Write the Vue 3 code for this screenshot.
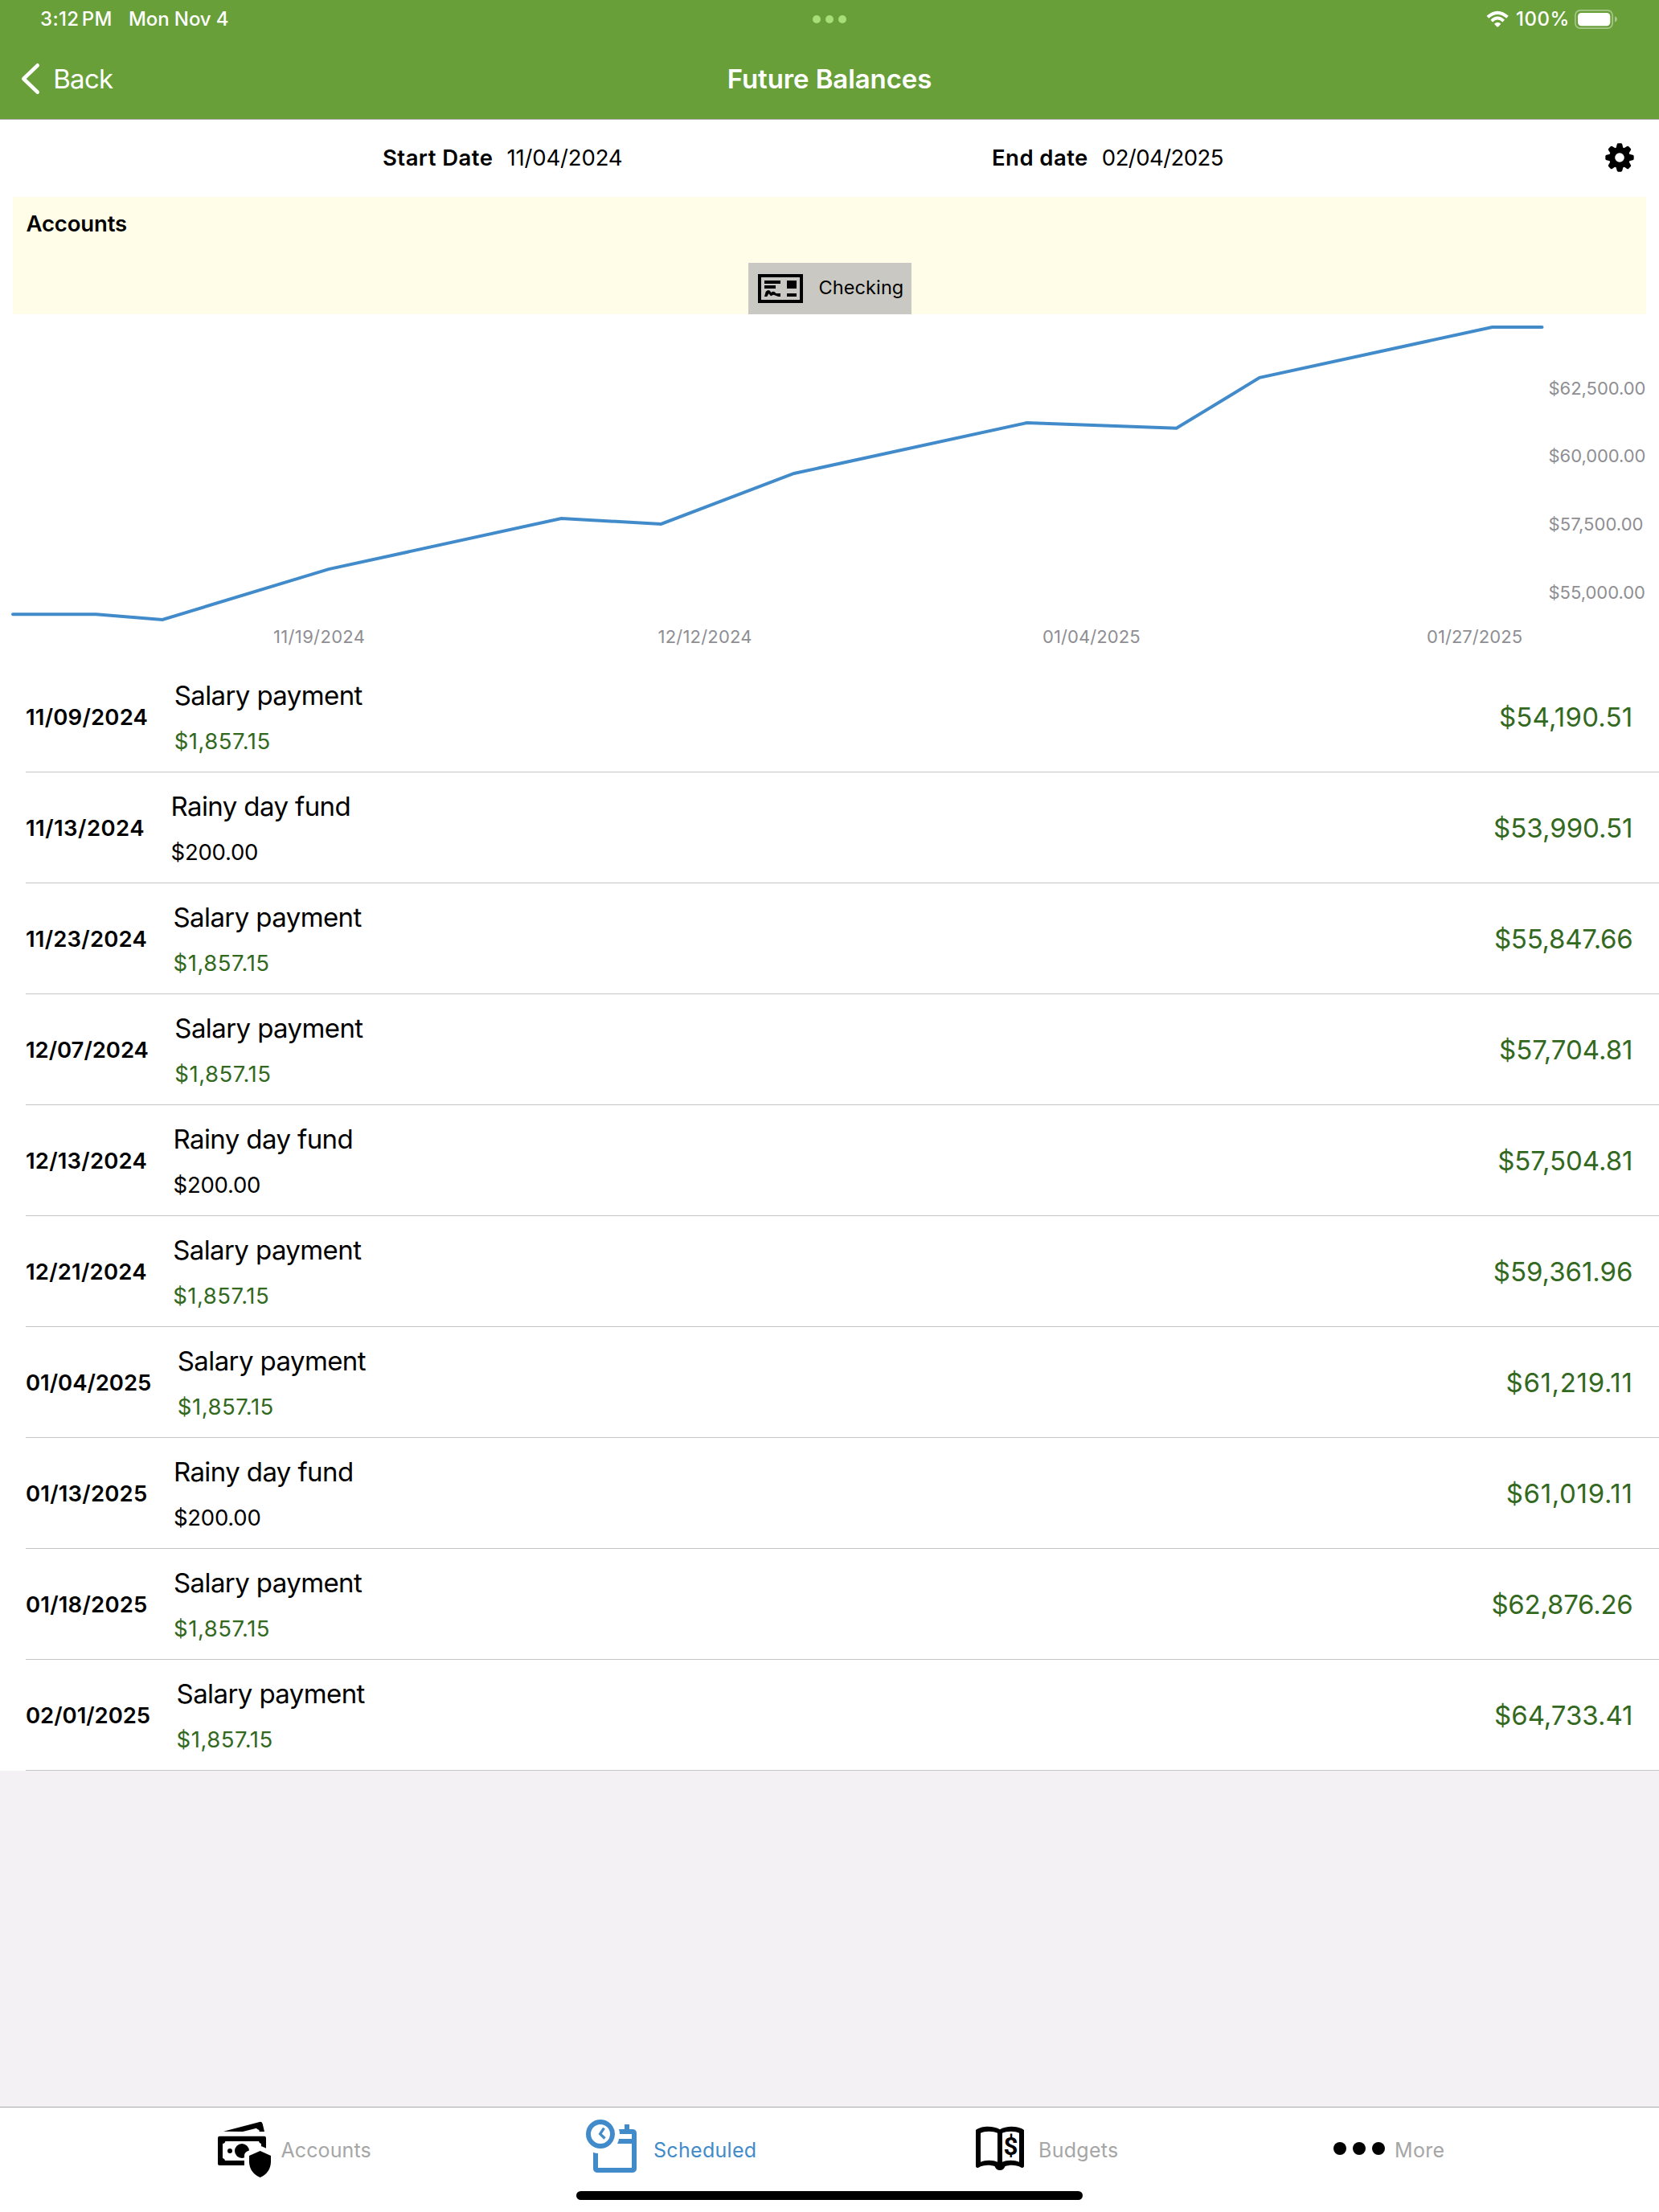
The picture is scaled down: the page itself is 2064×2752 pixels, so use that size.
<script setup>
const START_DAY = Date.UTC(2024, 10, 4)

const entries = [
  { date: '11/09/2024', title: 'Salary payment', amount: '$1,857.15', income: true, balance: '$54,190.51' },
  { date: '11/13/2024', title: 'Rainy day fund', amount: '$200.00', income: false, balance: '$53,990.51' },
  { date: '11/23/2024', title: 'Salary payment', amount: '$1,857.15', income: true, balance: '$55,847.66' },
  { date: '12/07/2024', title: 'Salary payment', amount: '$1,857.15', income: true, balance: '$57,704.81' },
  { date: '12/13/2024', title: 'Rainy day fund', amount: '$200.00', income: false, balance: '$57,504.81' },
  { date: '12/21/2024', title: 'Salary payment', amount: '$1,857.15', income: true, balance: '$59,361.96' },
  { date: '01/04/2025', title: 'Salary payment', amount: '$1,857.15', income: true, balance: '$61,219.11' },
  { date: '01/13/2025', title: 'Rainy day fund', amount: '$200.00', income: false, balance: '$61,019.11' },
  { date: '01/18/2025', title: 'Salary payment', amount: '$1,857.15', income: true, balance: '$62,876.26' },
  { date: '02/01/2025', title: 'Salary payment', amount: '$1,857.15', income: true, balance: '$64,733.41' },
]

// Chart scale: 92 days across the plot width, 2500 dollars per 84.7px
const dayX = (date) => {
  const [m, d, y] = date.split('/').map(Number)
  return 16 + ((Date.UTC(y, m - 1, d) - START_DAY) / 86400000) * (1902.5 / 92)
}
const valueY = (value) => 771 - (value - 53990.51) * 0.033885
const toNumber = (text) => Number(text.replace(/[$,]/g, ''))

const points = [
  [dayX('11/04/2024'), valueY(54190.51)],
  ...entries.map((e) => [dayX(e.date), valueY(toNumber(e.balance))]),
  [dayX('02/04/2025'), valueY(64733.41)],
]
  .map(([x, y]) => `${x.toFixed(1)},${y.toFixed(1)}`)
  .join(' ')

const yLabels = [
  { text: '$62,500.00', y: 491, w: 121 },
  { text: '$60,000.00', y: 575, w: 121 },
  { text: '$57,500.00', y: 660, w: 118 },
  { text: '$55,000.00', y: 745, w: 120.5 },
]
const xLabels = [
  { text: '11/19/2024', x: 340, w: 114 },
  { text: '12/12/2024', x: 818.5, w: 117 },
  { text: '01/04/2025', x: 1297, w: 121.5 },
  { text: '01/27/2025', x: 1775, w: 119 },
]

// The digit 1 is narrow, so strings holding several get looser tracking
const tracking = (text, base, perOne) => ({
  letterSpacing: `${(base + perOne * (text.split('1').length - 1)).toFixed(2)}px`,
})

const teeth = [0, 45, 90, 135, 180, 225, 270, 315]
</script>

<template>
  <div class="screen">
    <header class="header">
      <div class="status">
        <div class="status-left">
          <span class="time">3:12 PM</span>
          <span class="day">Mon Nov 4</span>
        </div>
        <div class="multitask"><i></i><i></i><i></i></div>
        <div class="status-right">
          <svg class="wifi" viewBox="327 40 86 64">
            <g fill="none" stroke="#fff" stroke-width="12">
              <path d="M332.500 65 Q369.500 32 406.500 65" />
              <path d="M347 79.500 Q369.500 58 392 79.500" stroke-width="11.500" />
            </g>
            <path d="M357 90 Q369.500 78 382 90 L372 100.500 Q369.500 103 367 100.500 Z" fill="#fff" />
          </svg>
          <span class="percent">100%</span>
          <svg class="battery" viewBox="657 36 162 72">
            <rect x="659.500" y="38.500" width="139" height="67" rx="19" fill="none" stroke="#a7c88a" stroke-width="5" />
            <rect x="669" y="48" width="121" height="48.500" rx="13" fill="#fff" />
            <path d="M807 60.500 Q816 64 816 72 Q816 80 807 83.500 Z" fill="#a7c88a" />
          </svg>
        </div>
      </div>
      <div class="nav">
        <div class="back">
          <svg class="chevron" viewBox="78 234 74 120">
            <path d="M140 244 L88 294 L140 344" fill="none" stroke="#fff" stroke-width="14" stroke-linecap="round" stroke-linejoin="round" />
          </svg>
          <span>Back</span>
        </div>
        <h1>Future Balances</h1>
      </div>
    </header>

    <main class="main">
      <section class="range">
        <div class="range-item">
          <b>Start Date</b>
          <span :style="tracking('11/04/2024', -0.55, 0.2)">11/04/2024</span>
        </div>
        <div class="range-item">
          <b>End date</b>
          <span :style="tracking('02/04/2025', -0.55, 0.2)">02/04/2025</span>
        </div>
        <svg class="gear" viewBox="-54 -54 108 108">
          <circle r="28" fill="none" stroke="#000" stroke-width="21" />
          <path v-for="a in teeth" :key="a" :transform="`rotate(${a})`" d="M-16 -32 Q-11.500 -38 -10 -49 Q-9 -53 -5 -53 H5 Q9 -53 10 -49 Q11.500 -38 16 -32 Z" />
        </svg>
      </section>

      <section class="accounts">
        <h2>Accounts</h2>
        <div class="chip">
          <svg class="check" viewBox="51 57 168 108">
            <rect x="57" y="63" width="156" height="96" fill="none" stroke="#000" stroke-width="12" />
            <path d="M75 81H135V93H75Z M75 99H117V111H75Z M159 81H195V111H159Z M159 129H195V141H159Z" />
            <path d="M75 141 L80 123 Q84 117 91 117 Q97 118 100 126 Q106 120 112 123 L119 129 H135 V141 H127 L109 134 L99 139 L91 130 L85 141 Z" />
          </svg>
          <span>Checking</span>
        </div>
      </section>

      <svg class="chart" viewBox="0 391 2064 432">
        <polyline :points="points" fill="none" stroke="#428bca" stroke-width="4" stroke-linecap="round" stroke-linejoin="miter" />
        <text v-for="l in yLabels" :key="l.text" x="1926.500" :y="l.y" :textLength="l.w">{{ l.text }}</text>
        <text v-for="l in xLabels" :key="l.text" :x="l.x" y="800" :textLength="l.w">{{ l.text }}</text>
      </svg>

      <ul class="list">
        <li v-for="e in entries" :key="e.date" class="row">
          <span class="date" :style="tracking(e.date, -0.3, 0.25)">{{ e.date }}</span>
          <div class="detail">
            <span class="title">{{ e.title }}</span>
            <span class="amount" :style="tracking(e.amount, -0.25, 0.38)" :class="{ income: e.income }">{{ e.amount }}</span>
          </div>
          <span class="balance" :style="tracking(e.balance, -0.25, 0.23)">{{ e.balance }}</span>
        </li>
      </ul>
    </main>

    <footer class="tabs">
      <div class="tab">
        <svg class="ic-accounts" viewBox="90 117 204 213">
          <path d="M114 155.500 L246 120.500 Q257 117 260 127 L267 156 H248 Q248 150 246 149 Q240 148 237 143 L186 156 Z" />
          <path d="M99 173.500 H267 Q273 173.500 273 180 V282 H99 Q93 282 93 276 V180 Q93 173.500 99 173.500 Z" />
          <path d="M121 192 H246 Q247 200 255 201 V264 H120 Q119 256 111 255 V201 Q120 200 121 192 Z" fill="#fff" />
          <circle cx="138" cy="228" r="9" />
          <circle cx="183" cy="228" r="27" />
          <path d="M192 262 H274 V284 H192 Z" fill="#fff" />
          <path d="M251 228 L291 246 V270 Q289 308 251 327 Q212 308 210 270 V246 Z" fill="#fff" stroke="#fff" stroke-width="36" stroke-linejoin="round" />
          <path d="M251 228 L291 246 V270 Q289 310 251 327 Q212 310 210 270 V246 Z" />
        </svg>
        <span>Accounts</span>
      </div>
      <div class="tab active">
        <svg class="ic-scheduled" viewBox="87 111 189 198">
          <circle cx="141" cy="165" r="45" fill="none" stroke="#428bca" stroke-width="18" />
          <path d="M154.500 143 L140 164.500 L157.500 181.500" fill="none" stroke="#428bca" stroke-width="10" />
          <path fill="#428bca" d="M231 129 H249 V147 H262 Q276 149 276 162 V295 Q275 308 262 309 H128 Q115 308 114 295 V233 Q123 237 132 237 V291 H258 V201 H204 Q209 192 210 183 H258 V165 H213 Q213 156 210 147 H231 Z" />
        </svg>
        <span>Scheduled</span>
      </div>
      <div class="tab">
        <svg class="ic-budgets" viewBox="30 45 180 168">
          <path d="M30 60 C50 43 98 43 120 58 C142 43 190 43 210 60 V196 Q207 203 200 200 C180 189 155 190 139 196 Q135 210 120 210 Q105 210 101 196 C85 190 60 189 40 200 Q32 203 30 196 Z" />
          <path d="M48 71 C62 63 96 63 111 71 V179 C96 171 64 171 48 179 Z M129 71 C144 63 178 63 192 71 V179 C176 171 144 171 129 179 Z" fill="#fff" />
          <text x="160.500" y="154" text-anchor="middle">$</text>
        </svg>
        <span>Budgets</span>
      </div>
      <div class="tab">
        <svg class="ic-more" viewBox="0 0 64 16">
          <circle cx="8" cy="8" r="8" /><circle cx="32" cy="8" r="8" /><circle cx="56" cy="8" r="8" />
        </svg>
        <span>More</span>
      </div>
      <div class="home"></div>
    </footer>
  </div>
</template>

<style>
body {
  margin: 0;
}
</style>

<style scoped>
.screen {
  display: flex;
  flex-direction: column;
  width: 2064px;
  height: 2752px;
  overflow: hidden;
  background: #f3f1f3;
  color: #000;
  font-family: Inter, "Liberation Sans", sans-serif;
  white-space: nowrap;
}
svg {
  display: block;
  flex: none;
}
h1,
h2,
ul {
  margin: 0;
  padding: 0;
  list-style: none;
}

.header {
  height: 148px;
  border-bottom: 1px solid #a9aaa8;
  background: #689f38;
  color: #fff;
}
.status {
  display: grid;
  grid-template-columns: 1fr auto 1fr;
  align-items: center;
  height: 48px;
  font-size: 24px;
  font-weight: 500;
  line-height: 48px;
}
.status-left {
  display: flex;
  padding-left: 50px;
}
.time {
  width: 110px;
  letter-spacing: 0.35px;
  word-spacing: -3.5px;
}
.day {
  letter-spacing: -0.1px;
}
.multitask {
  display: flex;
  gap: 6px;
}
.multitask i {
  width: 10px;
  height: 10px;
  border-radius: 50%;
  background: #a6df76;
}
.status-right {
  display: flex;
  align-items: center;
  justify-content: flex-end;
  padding-right: 51px;
}
.wifi {
  width: 28.7px;
  height: 21.3px;
}
.percent {
  width: 73px;
  margin-left: 8px;
  letter-spacing: 0.5px;
}
.battery {
  width: 54px;
  height: 24px;
}
.nav {
  display: grid;
  grid-template-columns: 1fr auto 1fr;
  align-items: center;
  height: 100px;
  font-size: 33px;
}
.back {
  display: flex;
  align-items: center;
  padding-left: 26px;
  letter-spacing: -0.7px;
}
.chevron {
  width: 24.7px;
  height: 40px;
  margin-right: 15.5px;
}
h1 {
  font-size: 33px;
  font-weight: 600;
  letter-spacing: -0.1px;
}

.main {
  background: #fff;
}
.range {
  display: flex;
  align-items: center;
  height: 94px;
  padding: 0 31px 2px 476px;
  font-size: 27.5px;
}
.range-item {
  display: flex;
  gap: 17px;
  width: 758px;
}
.range-item b {
  font-weight: 600;
  letter-spacing: 0.45px;
}
.range-item + .range-item {
  width: 400px;
}
.gear {
  width: 36px;
  height: 36px;
  margin-left: auto;
}

.accounts {
  display: flex;
  flex-direction: column;
  align-items: center;
  height: 146px;
  margin: 0 16px;
  background: #fffde7;
}
h2 {
  align-self: stretch;
  height: 82px;
  padding-left: 16.5px;
  font-size: 27.5px;
  font-weight: 600;
  letter-spacing: -0.15px;
  line-height: 66px;
}
.chip {
  display: flex;
  width: 191px;
  height: 64px;
  padding-left: 12px;
  background: #c9c8c2;
  font-size: 23.5px;
  letter-spacing: 0.1px;
  line-height: 62px;
}
.check {
  width: 56px;
  height: 36px;
  margin: 14px 20px 14px 0;
}

.chart {
  width: 2064px;
  height: 432px;
}
.chart text {
  fill: #8e8e93;
  font-size: 22px;
}

.row {
  display: flex;
  align-items: center;
  height: 137px;
  margin-left: 32px;
  padding-right: 32.5px;
  border-bottom: 1px solid #c6c6c8;
}
.date {
  margin-right: 32.5px;
  font-size: 27.5px;
  font-weight: 600;
}
.detail {
  display: flex;
  flex-direction: column;
  line-height: 57px;
  padding-top: 4px;
}
.title {
  font-size: 33px;
  letter-spacing: -0.6px;
}
.amount {
  font-size: 27.5px;
}
.balance {
  margin-left: auto;
  font-size: 33px;
}
.income,
.balance {
  color: #33691e;
}

.tabs {
  display: grid;
  grid-template-columns: 458px 485px 445px auto;
  grid-template-rows: 104px 11px;
  justify-content: start;
  height: 130px;
  margin-top: auto;
  padding-left: 271px;
  border-top: 1px solid #a9a9ab;
  background: #fff;
}
.tab {
  display: flex;
  align-items: flex-start;
  color: #a6a6a6;
  font-size: 25px;
  letter-spacing: 0.3px;
  line-height: 106px;
}
.tab.active {
  color: #428bca;
}
.ic-accounts {
  width: 68px;
  height: 71px;
  margin: 17px 11.5px 0 -1px;
}
.tab:first-child {
  letter-spacing: 0.1px;
}
.ic-scheduled {
  width: 63px;
  height: 66px;
  margin: 15px 21px 0 0;
}
.ic-budgets {
  width: 60px;
  height: 56px;
  margin: 23px 18px 0 0;
}
.ic-budgets text {
  font: 700 94px Roboto, sans-serif;
  letter-spacing: 0;
}
.ic-more {
  width: 64px;
  height: 16px;
  margin: 43px 12px 0 0;
}
.home {
  grid-column: 1 / -1;
  width: 630px;
  height: 11px;
  margin-left: 446px;
  border-radius: 6px;
  background: #000;
}
</style>
